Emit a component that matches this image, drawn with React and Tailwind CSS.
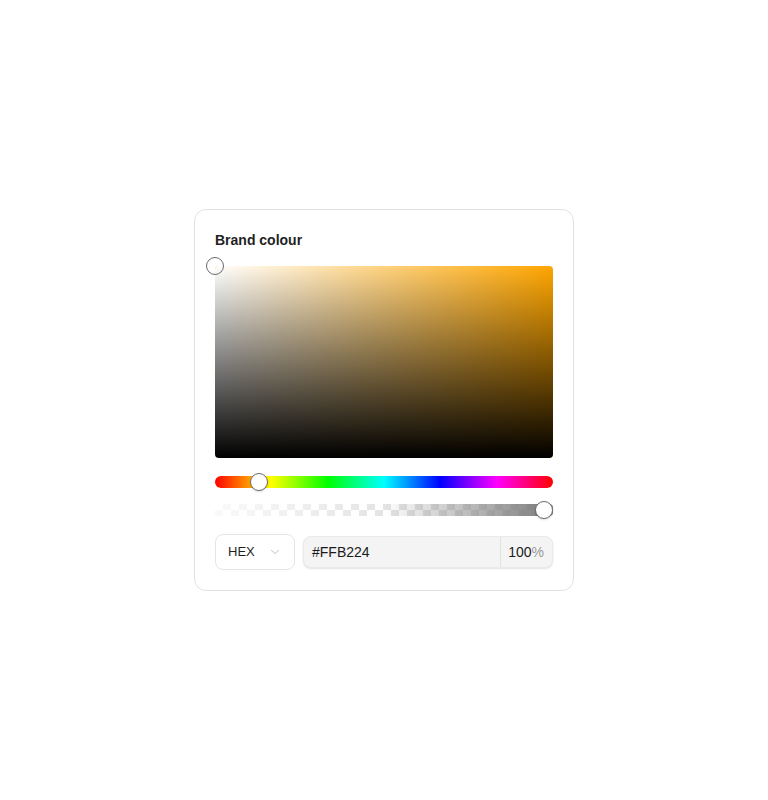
import { useState } from 'react';
import { ChevronDown } from 'lucide-react';

const HUE = 39;
const TRACK = 320; // slider width minus thumb size

const Thumb = ({ left }) => (
    <div
        className="absolute top-1/2 w-[18px] h-[18px] -translate-x-1/2 -translate-y-1/2 rounded-full bg-white border border-[#6b6b6b] shadow-[0_1px_2px_rgba(0,0,0,0.15)]"
        style={{ left }}
    />
);

const ColorPicker = () => {
    const [hex] = useState('#FFB224');
    const [alpha] = useState(100);

    return (
        <div className="w-[380px] bg-white border border-[#e2e2e2] rounded-xl p-5 font-['Liberation_Sans',Arial,sans-serif]">
            <h2 className="text-sm font-bold text-[#1f1f1f] leading-5 mb-4">Brand colour</h2>

            {/* saturation / value area */}
            <div className="relative h-48 rounded bg-[hsl(39,100%,50%)]">
                <div className="absolute inset-0 rounded bg-gradient-to-r from-white to-transparent" />
                <div className="absolute inset-0 rounded bg-gradient-to-b from-transparent to-black" />
                <div className="absolute left-0 top-0 w-[18px] h-[18px] -translate-x-1/2 -translate-y-1/2 rounded-full border border-[#6b6b6b] bg-transparent" />
            </div>

            {/* hue */}
            <div className="relative h-3 mt-[18px] rounded-full bg-[linear-gradient(to_right,#f00,#ff0,#0f0,#0ff,#00f,#f0f,#f00)]">
                <Thumb left={9 + (HUE / 360) * TRACK} />
            </div>

            {/* alpha */}
            <div className="relative h-3 mt-4 rounded-sm bg-[repeating-conic-gradient(#e4e4e4_0%_25%,#ffffff_0%_50%)] bg-[length:16px_12px]">
                <div className="absolute inset-0 rounded-sm bg-gradient-to-r from-white/80 via-transparent to-[#7a7a7a]" />
                <Thumb left={9 + (alpha / 100) * TRACK} />
            </div>

            <div className="flex gap-2 mt-[18px]">
                <button className="w-20 h-9 flex items-center justify-between pl-3 pr-3 border border-[#e5e5e5] rounded-lg bg-white text-[13px] text-[#1f1f1f]">
                    HEX
                    <ChevronDown size={14} strokeWidth={1.5} className="text-[#b5b5b5]" />
                </button>
                <div className="flex-1 h-8 mt-0.5 flex items-stretch rounded-lg bg-[#f4f4f4] border border-[#ebebeb] shadow-[0_1px_2px_rgba(0,0,0,0.12)]">
                    <div className="flex-1 flex items-center pl-2 text-sm text-[#1a1a1a]">{hex}</div>
                    <div className="w-[52px] flex items-center justify-end pr-2 border-l border-[#e3e3e3] text-sm text-[#1a1a1a]">
                        {alpha}<span className="text-[#9a9a9a]">%</span>
                    </div>
                </div>
            </div>
        </div>
    );
};

const App = () => (
    <div className="min-h-screen bg-white flex items-center justify-center">
        <ColorPicker />
    </div>
);

export default App;
